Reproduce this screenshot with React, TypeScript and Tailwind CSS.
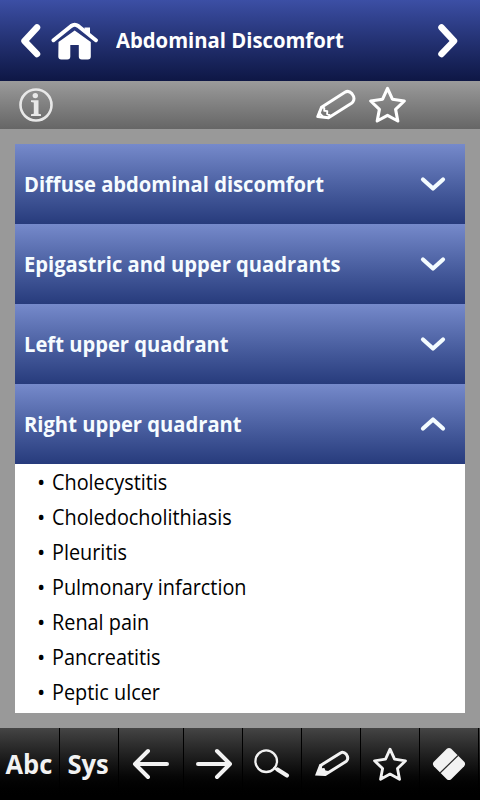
import { useState } from "react";

const sections = [
  { title: "Diffuse abdominal discomfort", items: [] },
  { title: "Epigastric and upper quadrants", items: [] },
  { title: "Left upper quadrant", items: [] },
  {
    title: "Right upper quadrant",
    items: [
      "Cholecystitis",
      "Choledocholithiasis",
      "Pleuritis",
      "Pulmonary infarction",
      "Renal pain",
      "Pancreatitis",
      "Peptic ulcer",
    ],
  },
];

const stroke = {
  fill: "none",
  stroke: "currentColor",
  strokeLinecap: "round",
  strokeLinejoin: "round",
} as const;

function HomeIcon() {
  return (
    <svg width="48" height="40" viewBox="0 0 48 40" fill="currentColor">
      <path {...stroke} strokeWidth="4" d="M2.500 19.200 20.200 5Q23.700 2.500 27.200 5L44.900 19.200" />
      <path d="M33.500 6.500H39v9L33.500 11z" />
      <path d="M7.500 21 23.700 9.500 39.800 21v14.500q0 3-3 3h-6q-3 0-3-3V24h-8.500v11.500q0 3-3 3h-6q-3 0-3-3z" />
    </svg>
  );
}

function InfoIcon() {
  return (
    <svg width="34" height="34" viewBox="0 0 34 34" fill="currentColor">
      <circle cx="17" cy="17" r="15.500" fill="none" stroke="currentColor" strokeWidth="2.600" />
      <circle cx="16.300" cy="7.600" r="2.700" />
      <path d="M12 12.300h7.500v13.400l2.500.6V28H12v-1.700l2.800-.6V14.600L12 14z" />
    </svg>
  );
}

function PencilIcon({ filledTip = false }: { filledTip?: boolean }) {
  return filledTip ? (
    <svg width="36" height="28" viewBox="0 0 36 28" fill="currentColor" className="ml-px">
      <path {...stroke} strokeWidth="3" d="m6.500 15.500 20-12.600q3-1.800 5.800 1.400 2.500 3.300.6 6.200-.5.8-1.300 1.300L11.300 24.400" />
      <path d="m5.300 14.500 3 1.300-.4 2.500 2.500-.4 1.100 2.700 3 .3-3.600 5.100L1 25.400z" />
    </svg>
  ) : (
    <svg width="42" height="32" viewBox="0 0 42 32">
      <path {...stroke} strokeWidth="3" d="m6.500 18.200 23.400-14.900q3.600-2.300 7 1.300 3.400 4.300 1.200 8-.6 1-1.600 1.700L13.500 28.800 2.800 27.500z" />
      <path {...stroke} strokeWidth="1.900" d="m6.500 18.200 2.800 1-.1 2.600 3.100.3-.2 3 2.600 1-1.200 2.700M4 23.500l3.500 3.600" />
    </svg>
  );
}

function StarIcon({ className }: { className: string }) {
  return (
    <svg className={className} viewBox="0 0 38 38">
      <path
        {...stroke}
        strokeWidth="3.100"
        d="M18.500 2.400 23.400 13.200 35.300 15 26.600 23.400 28.800 35 18.500 29.400 8.200 35 10.400 23.400 1.700 15 13.600 13.200z"
      />
    </svg>
  );
}

function Chevron({ open }: { open: boolean }) {
  return (
    <svg width="26" height="16" viewBox="0 0 26 16" className="text-[#f4fcff]">
      <path {...stroke} strokeWidth="4.200" d={open ? "m3 12.500 10-9 10 9" : "m3 3.500 10 9 10-9"} />
    </svg>
  );
}

function ArrowIcon({ right = false }: { right?: boolean }) {
  return (
    <svg width="38" height="32" viewBox="0 0 38 32" className={right ? "ml-[2px] -scale-x-100" : ""}>
      <path {...stroke} strokeWidth="4" d="M35 16H3M16 3 3 16l13 13" />
    </svg>
  );
}

function SearchIcon() {
  return (
    <svg width="36" height="30" viewBox="0 0 36 30">
      <circle cx="12.200" cy="12.200" r="10.800" {...stroke} strokeWidth="2.300" />
      <path {...stroke} strokeWidth="2" d="m20 19 3 2" />
      <path {...stroke} strokeWidth="4.200" d="m23.500 20.500 9.500 6" />
    </svg>
  );
}

function EraserIcon() {
  return (
    <svg width="34" height="34" viewBox="0 0 34 34">
      <path
        d="M14.800 1.800q2.200-1.800 4.400 0l13 13q1.800 2.200 0 4.400l-13 13q-2.200 1.800-4.400 0l-13-13q-1.800-2.200 0-4.400z"
        fill="currentColor"
      />
      <path d="m8 26 18-17.500" stroke="#292929" strokeWidth="1.200" />
    </svg>
  );
}

const tools = [
  { id: "abc", width: "w-[60px]", icon: <span className="mr-px scale-x-[0.98] text-[26px]">Abc</span> },
  { id: "sys", width: "w-[59px]", icon: <span className="mr-px scale-x-[0.98] text-[26px]">Sys</span> },
  { id: "back", width: "w-[65px]", icon: <ArrowIcon /> },
  { id: "forward", width: "w-[59px]", icon: <ArrowIcon right /> },
  { id: "search", width: "w-[59px]", icon: <SearchIcon /> },
  { id: "edit", width: "w-[59px]", icon: <PencilIcon filledTip /> },
  { id: "favorite", width: "w-[59px]", icon: <StarIcon className="ml-px size-[35px]" /> },
  { id: "erase", width: "w-[59px]", icon: <EraserIcon /> },
];

export default function App() {
  const [openIndex, setOpenIndex] = useState(3);

  return (
    <div className="flex h-[800px] w-[480px] flex-col overflow-hidden bg-[#999] font-['Open_Sans','Noto_Sans',sans-serif]">
      {/* Title bar */}
      <header className="flex h-[81px] shrink-0 items-center bg-linear-to-b from-[#3c4fa5] to-[#0e1745] pr-[21px] pl-[20px] text-white">
        <svg width="22" height="36" viewBox="0 0 22 36">
          <path {...stroke} strokeWidth="6.500" d="M17 4.500 4.500 18l12.500 13" />
        </svg>
        <span className="ml-[9px]">
          <HomeIcon />
        </span>
        <h1 className="ml-[17px] origin-left scale-x-[0.921] pb-[3px] text-[22px] font-bold whitespace-nowrap">
          Abdominal Discomfort
        </h1>
        <svg className="ml-auto" width="22" height="36" viewBox="0 0 22 36">
          <path {...stroke} strokeWidth="6.500" d="m4.500 4.500 12.500 13.500-12.500 13" />
        </svg>
      </header>

      {/* Page actions */}
      <div className="flex h-12 shrink-0 items-center bg-linear-to-b from-[#9b9b9b] to-[#666] pr-[73px] pl-[19px]">
        <span className="text-[#e8e8e8]">
          <InfoIcon />
        </span>
        <div className="ml-auto flex items-center gap-[12px] text-white">
          <PencilIcon />
          <StarIcon className="size-[38px]" />
        </div>
      </div>

      {/* Accordion */}
      <main className="flex-1 px-[15px] pt-[15px]">
        {sections.map((section, i) => (
          <section key={section.title}>
            <button
              onClick={() => setOpenIndex(openIndex === i ? -1 : i)}
              className="flex h-20 w-full items-center justify-between bg-linear-to-b from-[#768acb] to-[#273b7c] pr-[19px] pl-[9px] text-left"
            >
              <span className="origin-left scale-x-[0.917] pb-[2px] text-[22px] font-bold whitespace-nowrap text-[#f6fcff]">
                {section.title}
              </span>
              <Chevron open={openIndex === i} />
            </button>
            {openIndex === i && (
              <ul className="h-[249px] bg-white text-[22px] leading-[35px] text-black">
                {section.items.map((item) => (
                  <li key={item} className="flex pl-[22px]">
                    <span className="w-[15px]">•</span>
                    <span className="origin-left scale-x-[0.902] whitespace-nowrap">{item}</span>
                  </li>
                ))}
              </ul>
            )}
          </section>
        ))}
      </main>

      {/* Bottom toolbar */}
      <nav className="flex h-[72px] shrink-0 bg-linear-to-b from-[#454545] to-black font-bold text-[#f2f2f2]">
        {tools.map((tool) => (
          <button
            key={tool.id}
            className={`flex shrink-0 items-center justify-center border-r border-black ${tool.width}`}
          >
            {tool.icon}
          </button>
        ))}
      </nav>
    </div>
  );
}
